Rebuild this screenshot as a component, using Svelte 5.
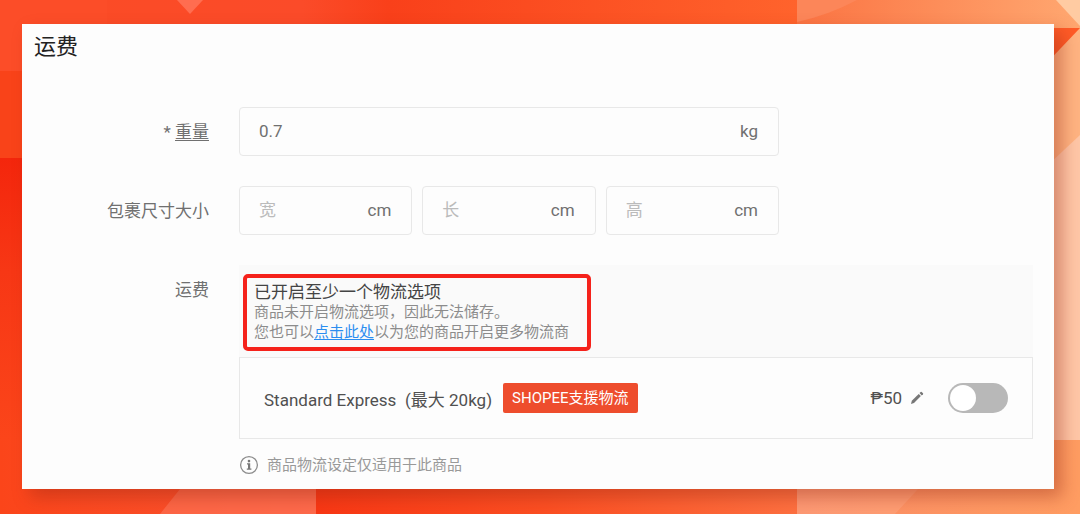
<script lang="ts">
	interface Dimension {
		id: string;
		placeholder: string;
		value: string;
	}

	let weight = $state('0.7');
	let enabled = $state(false);
	let dimensions: Dimension[] = $state([
		{ id: 'width', placeholder: '宽', value: '' },
		{ id: 'length', placeholder: '长', value: '' },
		{ id: 'height', placeholder: '高', value: '' }
	]);
</script>

<div class="page">
	<svg class="backdrop" viewBox="0 0 1080 514" preserveAspectRatio="none" aria-hidden="true">
		<defs>
			<linearGradient id="top" x1="0" x2="1">
				<stop offset="0" stop-color="#fb4b25" />
				<stop offset="0.28" stop-color="#fb4b29" />
				<stop offset="0.36" stop-color="#f9401a" />
				<stop offset="0.738" stop-color="#ff632c" />
				<stop offset="0.738" stop-color="#fb7443" />
				<stop offset="1" stop-color="#ffa770" />
			</linearGradient>
			<linearGradient id="left" x1="0" y1="0" x2="0" y2="1">
				<stop offset="0" stop-color="#f4260c" />
				<stop offset="0.4" stop-color="#f73715" />
				<stop offset="1" stop-color="#fb451a" />
			</linearGradient>
			<linearGradient id="bottom" x1="0" x2="1">
				<stop offset="0" stop-color="#fb451a" />
				<stop offset="0.293" stop-color="#fa5433" />
				<stop offset="0.293" stop-color="#f83714" />
				<stop offset="0.5" stop-color="#fb4e22" />
				<stop offset="0.738" stop-color="#fd7040" />
				<stop offset="0.738" stop-color="#fc8d66" />
				<stop offset="1" stop-color="#ff9d62" />
			</linearGradient>
		</defs>
		<rect width="1080" height="60" fill="url(#top)" />
		<rect y="60" width="540" height="440" fill="url(#left)" />
		<rect width="107" height="71" fill="#fc4d28" />
		<rect y="71" width="107" height="87" fill="#f94319" />
		<rect y="158" width="107" height="282" fill="url(#left)" />
		<path d="M177 0h26l-13 14z" fill="#ff6d50" />
		<path d="M797 0h60q-28 15-60 22z" fill="#fc8659" />
		<rect x="1000" y="28" width="80" height="412" fill="#ffb482" />
		<path d="M1056 0h24v26z" fill="#ffcba2" />
		<path d="M1000 28h80l-80 84z" fill="#ff5b27" />
		<path d="M1080 135v305h-80V210z" fill="#ffc7a7" />
		<rect y="440" width="1080" height="74" fill="url(#bottom)" />
		<path d="M160 514l20-25h136v25z" fill="#ff8064" opacity="0.5" />
		<path d="M797 489h121l-23 25h-98z" fill="#ffb190" opacity="0.35" />
	</svg>

	<main class="card">
		<h1>运费</h1>

		<form class="form">
			<label class="label" for="weight">* <span class="hint">重量</span></label>
			<div class="fields">
				<div class="field">
					<input id="weight" type="text" bind:value={weight} />
					<span class="unit">kg</span>
				</div>
			</div>

			<label class="label" for="width">包裹尺寸大小</label>
			<div class="fields">
				{#each dimensions as dim (dim.id)}
					<div class="field">
						<input
							id={dim.id}
							type="text"
							placeholder={dim.placeholder}
							aria-label={dim.placeholder}
							bind:value={dim.value}
						/>
						<span class="unit">cm</span>
					</div>
				{/each}
			</div>

			<span class="label">运费</span>
			<section class="shipping">
				<div class="notice">
					<div class="alert">
						<h2>已开启至少一个物流选项</h2>
						<p>商品未开启物流选项，因此无法储存。</p>
						<p>您也可以<a href="#logistics">点击此处</a>以为您的商品开启更多物流商</p>
					</div>
				</div>
				<div class="option">
					<label class="name" for="express">Standard Express&ensp;(最大 20kg)</label>
					<span class="badge">SHOPEE支援物流</span>
					<span class="price">₱50</span>
					<button class="edit" type="button" aria-label="edit">
						<svg viewBox="0 0 14 14" width="14" height="14">
							<path d="M1 13l.8-3.2 6.9-6.9 2.2 2.2L4 12z" />
							<path d="M9.5 2.1l1.2-1.2q.5-.4 1 0l1.3 1.3q.4.5 0 1l-1.2 1.2z" />
						</svg>
					</button>
					<input id="express" class="toggle" type="checkbox" bind:checked={enabled} />
				</div>
				<p class="note">
					<svg viewBox="0 0 20 20" width="20" height="20" aria-hidden="true">
						<circle cx="10" cy="10" r="8.4" fill="none" stroke="#8c8c8c" stroke-width="1.3" />
						<circle cx="10" cy="6.1" r="1.3" fill="#777" />
						<path d="M8 8.3h3.2v5.2h1.2v1.2H7.8v-1.2H9V9.5H8z" fill="#777" />
					</svg>
					商品物流设定仅适用于此商品
				</p>
			</section>
		</form>
	</main>
</div>

<style>
	:global(body) {
		margin: 0;
	}

	.page {
		position: relative;
		box-sizing: border-box;
		min-height: 100vh;
		padding: 24px 26px 25px 22px;
		font-family: Roboto, 'Noto Sans CJK SC', sans-serif;
		font-size: 17px;
		color: #707070;
	}

	.backdrop {
		position: absolute;
		inset: 0;
		width: 100%;
		height: 100%;
	}

	.card {
		position: relative;
		box-sizing: border-box;
		padding: 6px 21px 12px 0;
		background: #fdfdfd;
		box-shadow: 8px 8px 16px rgba(150, 40, 20, 0.4);
	}

	h1,
	h2,
	p {
		margin: 0;
		font-weight: 400;
	}

	h1 {
		padding-left: 12px;
		font-size: 22px;
		line-height: 34px;
		color: #222;
	}

	.form {
		display: grid;
		grid-template-columns: 187px 1fr;
		gap: 30px;
		margin-top: 43px;
	}

	.label {
		line-height: 51px;
		height: 49px;
		text-align: right;
	}

	.hint {
		text-decoration: underline;
		text-underline-offset: 2px;
		text-decoration-thickness: 1px;
	}

	.fields {
		display: flex;
		gap: 10px;
		max-width: 540px;
	}

	.field {
		display: flex;
		flex: 1;
		align-items: center;
		box-sizing: border-box;
		min-width: 0;
		height: 49px;
		padding: 0 20px 2px 19px;
		border: 1px solid #e8e8e8;
		border-radius: 4px;
	}

	.field input {
		flex: 1;
		min-width: 0;
		padding: 0;
		border: 0;
		outline: 0;
		background: none;
		font: inherit;
		color: #707070;
	}

	.field input::placeholder {
		color: #bbb;
	}

	.notice {
		display: flex;
		padding: 9px 4px 6px;
		background: #fafafa;
	}

	.alert {
		box-sizing: border-box;
		width: 348px;
		padding: 5px 8px 5px 7px;
		border: 4px solid #f5221b;
		border-radius: 5px;
		font-size: 15px;
		line-height: 20px;
		white-space: nowrap;
		color: #8c8c8c;
	}

	.alert h2 {
		font-size: 17px;
		line-height: 19px;
		color: #444;
	}

	.alert a {
		color: #2b8df0;
		text-underline-offset: 2px;
	}

	.option {
		display: flex;
		align-items: center;
		box-sizing: border-box;
		height: 82px;
		padding: 0 24px;
		border: 1px solid #e8e8e8;
		color: #505050;
	}

	.badge {
		margin-left: 11px;
		padding: 0 9px;
		border-radius: 2px;
		background: #ee4d2d;
		font-size: 15px;
		line-height: 30px;
		color: #fff;
	}

	.price {
		margin-left: auto;
	}

	.edit {
		display: flex;
		margin: 0 24px 0 8px;
		padding: 0;
		border: 0;
		background: none;
		fill: #777;
		cursor: pointer;
	}

	.toggle {
		appearance: none;
		width: 60px;
		height: 30px;
		margin: 0;
		padding: 2px;
		border-radius: 15px;
		background: #b8b8b8;
		cursor: pointer;
	}

	.toggle::before {
		content: '';
		display: block;
		width: 26px;
		height: 26px;
		border-radius: 50%;
		background: #fff;
		transition: transform 0.2s;
	}

	.toggle:checked {
		background: #55cc77;
	}

	.toggle:checked::before {
		transform: translateX(30px);
	}

	.note {
		display: flex;
		align-items: center;
		gap: 8px;
		margin-top: 14px;
		font-size: 15px;
		line-height: 24px;
		color: #999;
	}
</style>
